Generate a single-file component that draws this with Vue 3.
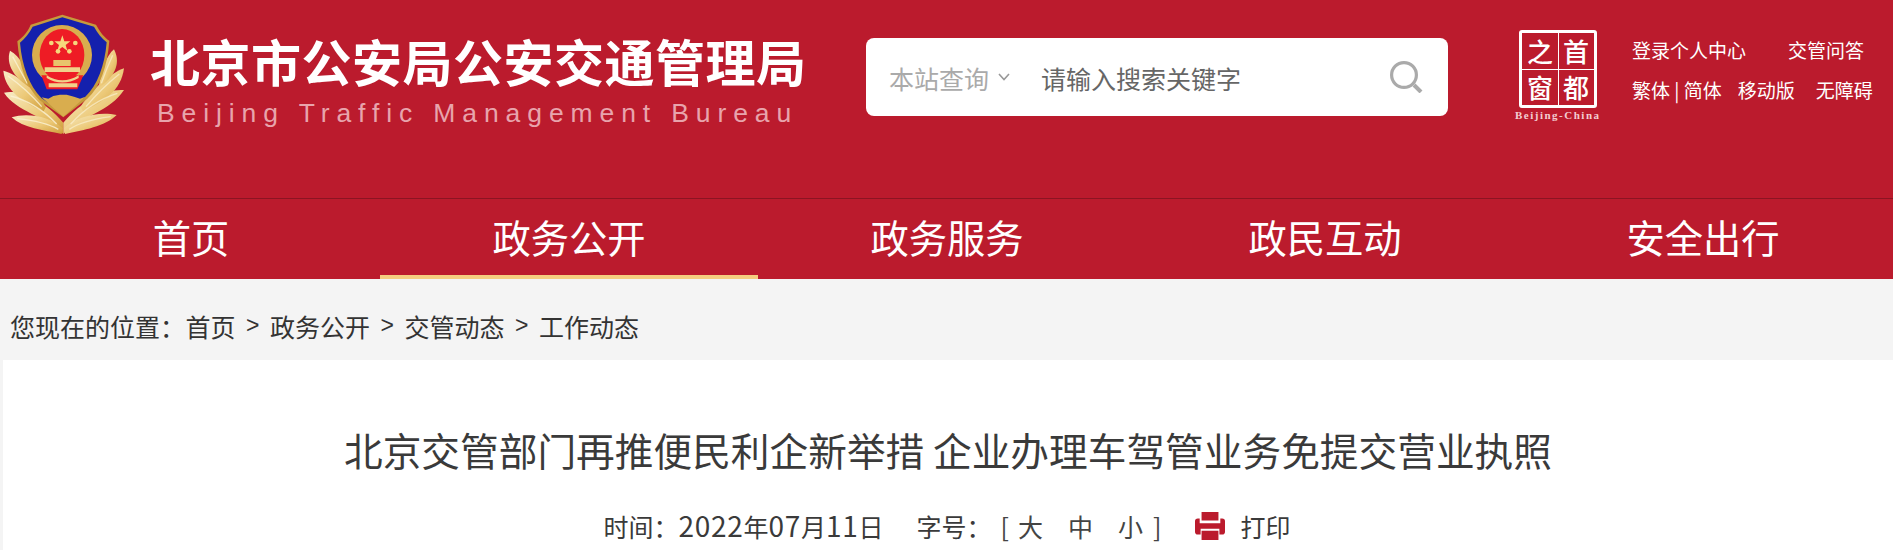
<template>
  <div class="page">
    <header class="head">
      <div class="brand">
        <svg class="emblem" viewBox="0 0 420 420" width="140" height="140">
          <defs>
            <linearGradient id="gold" x1="0" y1="0" x2="1" y2="1">
              <stop offset="0" stop-color="#f8ecc6" />
              <stop offset="0.55" stop-color="#ecc978" />
              <stop offset="1" stop-color="#cf9c3a" />
            </linearGradient>
          </defs>
          <!-- wheat, left side -->
          <g fill="url(#gold)">
            <path d="M190 402 C130 345 50 335 12 278 C60 268 130 298 190 368Z" />
            <path d="M130 335 C70 305 16 275 10 212 C50 222 105 268 138 320Z" />
            <path d="M90 262 C45 235 16 195 30 152 C62 168 82 212 92 262Z" />
            <path d="M185 402 C130 390 70 385 35 352 C80 338 150 348 188 385Z" />
          </g>
          <g fill="none" stroke="#fbf3d6" stroke-width="4" opacity="0.8">
            <path d="M32 288 C80 300 130 330 170 372" />
            <path d="M24 228 C55 250 95 285 125 320" />
            <path d="M38 170 C52 195 68 225 82 250" />
            <path d="M52 356 C90 360 140 368 175 388" />
          </g>
          <!-- wheat, right side -->
          <g fill="url(#gold)">
            <path d="M190 402 C250 345 330 335 372 270 C320 266 250 298 190 368Z" />
            <path d="M250 335 C310 305 364 272 372 205 C330 220 275 268 242 320Z" />
            <path d="M298 262 C338 235 366 195 342 148 C318 168 304 212 296 262Z" />
            <path d="M195 402 C250 390 315 380 350 345 C300 333 230 348 192 385Z" />
          </g>
          <g fill="none" stroke="#fbf3d6" stroke-width="4" opacity="0.65">
            <path d="M352 280 C300 296 250 330 212 372" />
            <path d="M358 222 C328 246 290 282 258 320" />
            <path d="M338 166 C326 192 314 222 304 250" />
            <path d="M332 350 C290 356 240 366 208 388" />
          </g>
          <path d="M187 44 L288 74 C300 95 312 112 328 122 C322 200 300 262 262 296 L190 352 L118 300 C80 262 58 200 52 124 C68 112 84 95 92 74Z" fill="#c69a3c" />
          <path d="M187 52 L282 80 C293 100 306 116 320 127 C314 198 292 256 256 290 L190 340 L124 294 C88 256 66 198 60 128 C74 116 88 100 98 80Z" fill="#1420ad" />
          <path d="M125 292 L145 296 L160 288 L180 284 L200 284 L222 290 L240 296 L256 290 L190 350Z" fill="#d9ad4e" />
          <circle cx="186" cy="165" r="90" fill="#d9ad4e" />
          <ellipse cx="186" cy="165" rx="67" ry="78" fill="#ee1c25" />
          <path d="M134 202 H240 V216 H134Z" fill="#f0d28a" />
          <path d="M160 198 V180 H212 V198Z" fill="#e8c46c" />
          <path d="M124 226 H250 L232 268 H140Z" fill="#ee1c25" />
          <path d="M146 250 H232 V262 H146Z M140 226 C170 246 204 246 236 226 L236 234 C204 252 170 252 140 234Z" fill="#f0d28a" />
          <g fill="#f6d77c">
            <path d="M187 106 L193 124 L211 124 L197 135 L202 152 L187 141 L172 152 L177 135 L163 124 L181 124Z" />
            <circle cx="154" cy="129" r="7" />
            <circle cx="226" cy="129" r="7" />
            <circle cx="174" cy="154" r="7" />
            <circle cx="208" cy="154" r="7" />
          </g>
        </svg>
        <div class="brand-text">
          <div class="brand-cn">北京市公安局公安交通管理局</div>
          <div class="brand-en">Beijing Traffic Management Bureau</div>
        </div>
      </div>

      <div class="search">
        <span class="scope">本站查询</span>
        <svg class="chevron" viewBox="0 0 12 8" width="12" height="8">
          <path d="M1 1 L6 6.5 L11 1" fill="none" stroke="#999" stroke-width="1.6" />
        </svg>
        <span class="placeholder">请输入搜索关键字</span>
        <svg class="glass" viewBox="0 0 34 32" width="34" height="32">
          <circle cx="15" cy="14" r="12.4" fill="none" stroke="#aaa" stroke-width="3.2" />
          <path d="M25 24 L32 31" stroke="#aaa" stroke-width="4" />
        </svg>
      </div>

      <div class="seal">
        <div class="seal-box">
          <span>之</span><span>首</span><span>窗</span><span>都</span>
        </div>
        <div class="seal-en">Beijing-China</div>
      </div>

      <div class="links">
        <div class="links-row first">
          <span>登录个人中心</span>
          <span>交管问答</span>
        </div>
        <div class="links-row second">
          <span>繁体 | 简体</span>
          <span>移动版</span>
          <span>无障碍</span>
        </div>
      </div>
    </header>

    <nav class="nav">
      <a v-for="item in navItems" :key="item" class="nav-item" :class="{ active: item === current }">{{ item }}</a>
    </nav>

    <div class="crumbs">
      <span class="here">您现在的位置：</span>
      <template v-for="(c, i) in crumbs" :key="c">
        <span v-if="i > 0" class="sep">&gt;</span>
        <span>{{ c }}</span>
      </template>
    </div>

    <main class="article">
      <h1 class="title">北京交管部门再推便民利企新举措 企业办理车驾管业务免提交营业执照</h1>
      <div class="meta">
        <span>时间：<span class="num">2022</span>年<span class="num">07</span>月<span class="num">11</span>日</span>
        <span class="size-label">字号：</span>
        <span class="sizes">
          <span class="bracket">[</span>
          <span>大</span>
          <span>中</span>
          <span>小</span>
          <span class="bracket">]</span>
        </span>
        <svg class="printer" viewBox="0 0 32 32" width="32" height="30">
          <path d="M7 1 H25 V10 H7Z M3 8 H5 V13 H27 V8 H29 Q32 8 32 11 V22 Q32 25 29 25 H26 V19 H6 V25 H3 Q0 25 0 22 V11 Q0 8 3 8Z M7 21 H25 V31 H7Z" fill="#bb1b2d" />
        </svg>
        <span>打印</span>
      </div>
    </main>
  </div>
</template>

<script setup>
const navItems = ['首页', '政务公开', '政务服务', '政民互动', '安全出行']
const current = '政务公开'
const crumbs = ['首页', '政务公开', '交管动态', '工作动态']
</script>

<style>
html,
body {
  margin: 0;
  background: #f4f4f4;
}
</style>

<style scoped>
.page {
  width: 1893px;
  height: 550px;
  overflow: hidden;
  font-family: "Noto Sans CJK SC", "Liberation Sans", sans-serif;
  color: #333;
}

.head {
  display: flex;
  height: 198px;
  background: #bb1b2d;
  border-bottom: 1px solid #8c1422;
  color: #fff;
}

.brand {
  display: flex;
  width: 866px;
  flex: none;
}

.emblem {
  flex: none;
  filter: blur(0.6px);
}

.brand-text {
  margin-left: 10px;
  padding-top: 30px;
}

.brand-cn {
  font-size: 50px;
  line-height: 60px;
  font-weight: 700;
  letter-spacing: 0.5px;
  white-space: nowrap;
}

.brand-en {
  margin-top: 8px;
  margin-left: 7px;
  font-family: "Liberation Sans", sans-serif;
  font-size: 26.5px;
  line-height: 30px;
  letter-spacing: 6.9px;
  color: #e8a4ac;
  white-space: nowrap;
}

.search {
  display: flex;
  align-items: center;
  flex: none;
  box-sizing: border-box;
  width: 582px;
  height: 78px;
  margin-top: 38px;
  padding: 0 25px 0 23px;
  background: #fff;
  border-radius: 8px;
  font-size: 25px;
}

.scope {
  padding-top: 2px;
  color: #aaa;
}

.chevron {
  margin-left: 9px;
}

.placeholder {
  padding-top: 2px;
  margin-left: 31px;
  color: #666;
}

.glass {
  margin-left: auto;
}

.seal {
  flex: none;
  width: 86px;
  margin-left: 67px;
  padding-top: 30px;
}

.seal-box {
  display: grid;
  grid-template-columns: 1fr 1fr;
  grid-auto-rows: 36px;
  box-sizing: border-box;
  width: 78px;
  height: 78px;
  margin: 0 auto;
  border: 3px solid #fff;
  border-radius: 3px;
  background:
    linear-gradient(#fff, #fff) center / 1px 100% no-repeat,
    linear-gradient(#fff, #fff) center / 100% 1px no-repeat;
}

.seal-box span {
  display: flex;
  align-items: center;
  justify-content: center;
  font-size: 26px;
  line-height: 30px;
  font-weight: 500;
}

.seal-en {
  margin-top: 2px;
  font-family: "Liberation Serif", serif;
  font-size: 11px;
  line-height: 11px;
  font-weight: 700;
  letter-spacing: 1.5px;
  white-space: nowrap;
  color: #f3cdd1;
}

.links {
  margin-left: 31px;
  padding-top: 36px;
  font-size: 19px;
  line-height: 28px;
  white-space: nowrap;
}

.links-row {
  display: flex;
}

.links-row.first {
  gap: 42px;
}

.links-row.second {
  margin-top: 12px;
}

.links-row.second span:nth-child(2) {
  margin-left: 16px;
}

.links-row.second span:nth-child(3) {
  margin-left: 21px;
}

.nav {
  display: flex;
  height: 80px;
  padding-left: 2px;
  background: #bb1b2d;
}

.nav-item {
  box-sizing: border-box;
  width: 378px;
  height: 80px;
  padding-bottom: 4px;
  border-bottom: 4px solid transparent;
  text-align: center;
  font-size: 38.3px;
  line-height: 76px;
  color: #fff;
}

.nav-item.active {
  border-bottom-color: #f5cd7f;
}

.crumbs {
  display: flex;
  align-items: center;
  gap: 10.5px;
  box-sizing: border-box;
  height: 81px;
  padding: 12px 0 0 10px;
  font-size: 25px;
  color: #333;
}

.crumbs .here {
  margin-right: -10px;
}

.sep {
  font-family: "Liberation Sans", sans-serif;
  font-size: 23px;
}

.article {
  margin-left: 3px;
  height: 190px;
  background: #fff;
  text-align: center;
}

.title {
  margin: 0;
  padding-top: 59px;
  font-size: 38.7px;
  line-height: 60px;
  font-weight: 400;
  color: #3a3a3a;
}

.meta {
  display: flex;
  align-items: center;
  justify-content: center;
  margin-top: 26px;
  padding-right: 2px;
  font-size: 25px;
  line-height: 40px;
  color: #3a3a3a;
}

.num {
  font-size: 28px;
  letter-spacing: 0.7px;
}

.size-label {
  margin-left: 33px;
}

.sizes {
  display: flex;
  gap: 25px;
  margin-left: 9px;
  color: #444;
}

.bracket:first-child {
  margin-right: -16px;
}

.bracket:last-child {
  margin-left: -15px;
}

.printer {
  margin-left: 33px;
  margin-right: 14px;
}
</style>
